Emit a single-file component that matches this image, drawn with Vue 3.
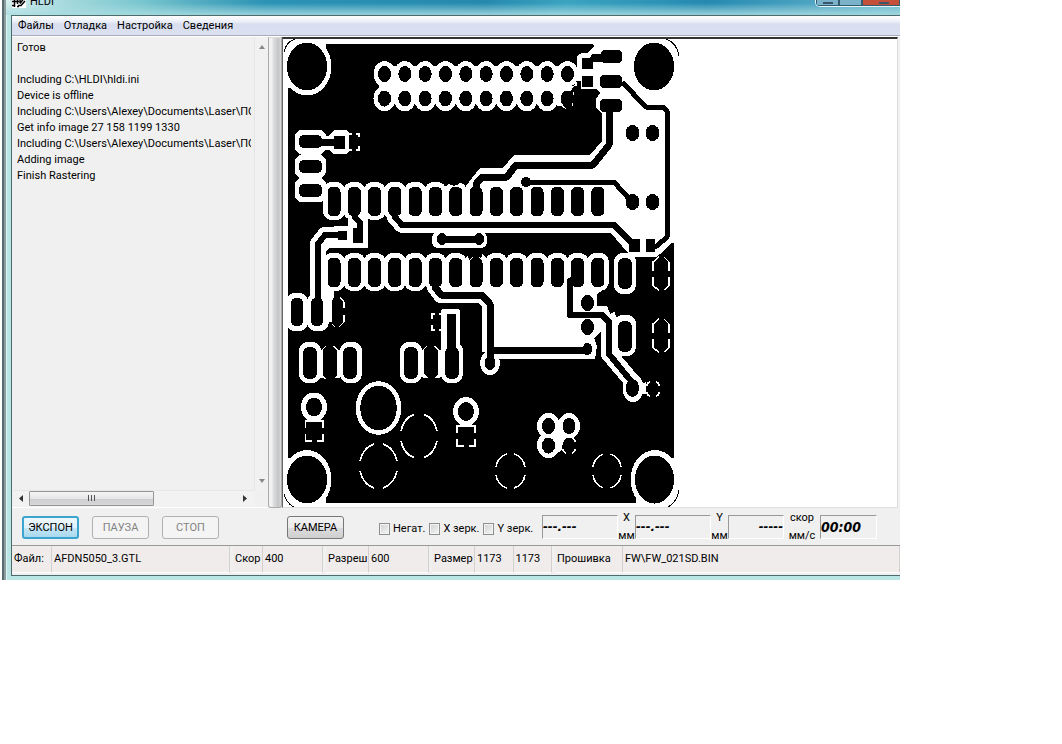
<script setup>
import { ref } from 'vue'

const menu = ['Файлы', 'Отладка', 'Настройка', 'Сведения']

const log = [
  'Готов',
  '',
  'Including C:\\HLDI\\hldi.ini',
  'Device is offline',
  'Including C:\\Users\\Alexey\\Documents\\Laser\\ПО\\',
  'Get info image 27 158 1199 1330',
  'Including C:\\Users\\Alexey\\Documents\\Laser\\ПО\\',
  'Adding image',
  'Finish Rastering',
].join('\n')

const negative = ref(false)
const mirrorX = ref(false)
const mirrorY = ref(false)

const range = (n, start, step) => Array.from({ length: n }, (_, i) => start + i * step)
const headerX = range(10, 384.5, 20.33)
const slotX = range(14, 334, 20.3)
</script>

<template>
  <div class="window">
    <header class="titlebar">
      <svg class="app-icon" width="14" height="14" viewBox="0 0 14 14" aria-hidden="true">
        <rect width="14" height="14" fill="#fff" />
        <path d="M0 7.500h7M0 11.500h3M2.500 4v9M5.500 3v7M5 12.500h2M13 3L8 9.500M13 7L9 11.500H6M8 6v3" fill="none" stroke="#000" stroke-width="1.500" />
      </svg>
      <span class="title">HLDI</span>
      <div class="caption">
        <button type="button" class="cap" aria-label="Minimize"><i></i></button>
        <button type="button" class="cap" aria-label="Maximize"></button>
        <button type="button" class="cap close" aria-label="Close"><i></i></button>
      </div>
    </header>

    <div class="client">
      <nav class="menu">
        <button v-for="m in menu" :key="m" type="button">{{ m }}</button>
      </nav>

      <main class="work">
        <section class="log">
          <textarea :value="log" readonly wrap="off" aria-label="Log"></textarea>
          <div class="vbar">
            <svg width="6" height="4" viewBox="0 0 6 4"><path d="M3 0L6 4H0z" fill="#888" /></svg>
            <svg width="6" height="4" viewBox="0 0 6 4"><path d="M3 4L6 0H0z" fill="#888" /></svg>
          </div>
          <div class="hbar">
            <svg width="4" height="7" viewBox="0 0 4 7"><path d="M4 0v7L0 3.500z" fill="#333" /></svg>
            <div class="thumb"><i></i><i></i><i></i></div>
            <svg class="right" width="4" height="7" viewBox="0 0 4 7"><path d="M0 0v7L4 3.500z" fill="#333" /></svg>
          </div>
        </section>
        <div class="splitter"></div>
        <section class="canvas">
          <svg class="board" width="398" height="468" viewBox="283 39 398 468" shape-rendering="crispEdges" role="img" aria-label="PCB">
            <rect x="288" y="44" width="386" height="459" />
            <!-- copper-free areas -->
            <g fill="#fff">
              <path d="M593 43H682V243H671L660 254L656 257H635L627 252L611 233H400L392 222V205H466L463 190L472 178L480 168H503L514 155H590L602 141V114L596 108V99L600 93L596 89H581V81H577V56L582 53H587L594 46z" />
              <path d="M440 272H608L607 287L597 294V306H607L612 318L602 330L594 338L597 346L595 359H486V302L478 290H440z" />
              <path d="M288 44H326V66H288zM288 66H300V88H288zM288 458H300V503H288zM307 480H326V503H307zM636 480H674V503H636zM655 458H674V480H655z" />
              <ellipse cx="307" cy="66.500" rx="24.500" ry="29" />
              <ellipse cx="307" cy="479.500" rx="24.500" ry="29.500" />
              <ellipse cx="655" cy="479.500" rx="24.500" ry="29.500" />
            </g>
            <rect x="674" y="39" width="8" height="468" fill="#fff" />
            <g>
              <ellipse cx="307" cy="66.500" rx="20" ry="24" />
              <ellipse cx="654" cy="66.500" rx="20" ry="24" />
              <ellipse cx="307" cy="479.500" rx="20" ry="24" />
              <ellipse cx="654.500" cy="479.500" rx="19.500" ry="24" />
            </g>
            <path d="M284 52Q286 42 295 39M666 39Q677 43 679 56M284 494Q287 504 294 507M679 490Q677 502 668 507" fill="none" stroke="#000" />

            <!-- header connector -->
            <g fill="#fff">
              <ellipse v-for="x in headerX" :key="x" :cx="x" cy="74" rx="11" ry="12.800" />
              <ellipse v-for="x in headerX.slice(0, 9)" :key="x" :cx="x" cy="98.500" rx="11" ry="12.800" />
              <rect x="379" y="80" width="186" height="14" />
              <path d="M375 66H572V80H375zM375 92H556V104H375z" />
              <path d="M555 86H577V81L571 91L563 94L561 102L566 109L561 106L557 106z" />
            </g>
            <ellipse v-for="x in headerX" :key="x" :cx="x" cy="74" rx="6.500" ry="8" />
            <ellipse v-for="x in headerX" :key="x" :cx="x" cy="98.500" rx="6.500" ry="8" />
            <path d="M573 95V92M572 106L573 103" stroke="#fff" />

            <!-- clearances -->
            <g fill="#fff">
              <rect x="295" y="130" width="31" height="24" rx="7" />
              <rect x="295" y="155" width="31" height="23" rx="7" />
              <rect x="295" y="178" width="31" height="24" rx="7" />
              <rect x="301" y="140" width="20" height="52" />
              <path d="M318 132L324 136H329L334 130H346L349 133V151L346 154H334L329 150H320z" />
              <rect v-for="x in slotX" :key="x" :x="x - 11" y="182" width="22" height="38" rx="9" />
              <rect v-for="x in slotX" :key="x" :x="x - 11" y="253" width="22" height="38" rx="9" />
              <path d="M323 190H600V212H323zM323 262H600V282H323z" />
              <rect x="432" y="232" width="55" height="16" rx="6" />
              <rect x="614" y="253" width="22" height="41" rx="9" />
              <rect x="614" y="315" width="22" height="41" rx="9" />
              <rect x="286" y="293" width="22" height="38" rx="9" />
              <rect x="307" y="293" width="22" height="38" rx="9" />
              <path d="M300 302H332V322H300zM322 280H334V322H322z" />
              <path d="M348 215H368V248H330L325 252V262H322V235L335 226H348z" />
              <rect x="299" y="342" width="22" height="41" rx="9" />
              <rect x="340" y="342" width="22" height="41" rx="9" />
              <rect x="400" y="342" width="22" height="41" rx="9" />
              <rect x="441" y="342" width="22" height="41" rx="9" />
              <path d="M317 350H323V376L326 379L317 377zM337 350H344V377L335 378L337 375zM418 350H424V374L428 378L418 377zM438 350H445V377L434 378L438 374z" />
              <rect x="441" y="309" width="19" height="45" rx="3" />
            </g>
            <g fill="none" stroke="#fff" stroke-width="16" stroke-linejoin="round">
              <path d="M395 214V217L402 225H420" />
              <path d="M318 310V244L325 235H344V236" />
              <path d="M435 282V287L441 295H482L490 304V352" />
              <path d="M607 315L609 320V354L631 380" />
            </g>
            <ellipse cx="490" cy="363" rx="10" ry="12" fill="#fff" />
            <ellipse cx="633" cy="388" rx="10.500" ry="14" fill="#fff" />
            <path d="M640 384L646 382V394L640 393z" fill="#fff" />

            <!-- black gaps around the open pads -->
            <path d="M447 178H462L459 184L454 186L449 184zM467 254L483 252L480 262H470z" />
            <path d="M448 190L446 186M449 190L452 187M458 186L463 191M469 261L473 258M479 258L483 262" stroke="#fff" stroke-width="1.500" fill="none" />

            <!-- slots -->
            <g>
              <rect v-for="x in slotX" :key="x" :x="x - 6.500" y="187" width="13" height="29" rx="5" />
              <rect v-for="x in slotX" :key="x" :x="x - 6.500" y="258" width="13" height="29" rx="5" />
              <rect x="618" y="258" width="14" height="31" rx="6" />
              <rect x="618" y="321" width="14" height="31" rx="6" />
              <rect x="653" y="258" width="15" height="32" rx="6" />
              <rect x="291" y="298" width="12" height="28" rx="5" />
              <rect x="311" y="298" width="12" height="28" rx="5" />
              <rect x="332" y="297" width="12" height="30" rx="5" />
              <rect x="303" y="347" width="14" height="32" rx="6" />
              <rect x="343" y="347" width="14" height="32" rx="6" />
              <rect x="404" y="347" width="14" height="32" rx="6" />
              <rect x="445" y="347" width="14" height="32" rx="6" />
              <rect x="447" y="314" width="9" height="40" />
              <rect x="299" y="135" width="23" height="13" rx="5" />
              <rect x="299" y="160" width="23" height="13" rx="5" />
              <rect x="299" y="184" width="23" height="13" rx="5" />
              <path d="M318 139H334V136H345V149H334V146H318z" />
              <path d="M582 58H590L592 54H602V62H593V69H582zM582 76H593V87H582z" />
              <rect x="601" y="50" width="21" height="13" rx="4" />
              <rect x="600" y="75" width="22" height="13" rx="4" />
              <rect x="600" y="99" width="22" height="13" rx="4" />
              <path d="M629 239H640V252H629zM646 239H655V252H646z" />
              <path d="M338 231H347V240H338zM353 228H363V243H353z" />
              <ellipse cx="442" cy="239" rx="5" ry="6" />
              <ellipse cx="479" cy="239" rx="5" ry="6" />
            </g>

            <!-- tracks -->
            <g fill="none" stroke="#000" stroke-linejoin="round">
              <path d="M476 192V184L482 177H507L516 165H593L609 145V106" stroke-width="7" />
              <path d="M526 182H614L632 202" stroke-width="5" />
              <path d="M622 82L646 107H663L667 111V237L657 246H650" stroke-width="5" />
              <path d="M395 210V217L402 225H614L634 245" stroke-width="6" />
              <path d="M355 212V217L360 223V235M318 310V244L325 235H344" stroke-width="6" />
              <path d="M442 239H479" stroke-width="7" />
              <path d="M435 280V287L441 295H482L490 304V365M490 350H588" stroke-width="7" />
              <path d="M577 276L570 281V315H602L609 322V354L631 381V388" stroke-width="6" />
            </g>
            <g>
              <circle cx="526" cy="182" r="5" />
              <ellipse cx="632.500" cy="133" rx="7" ry="8" />
              <ellipse cx="652.500" cy="133" rx="7" ry="8" />
              <ellipse cx="632.500" cy="202" rx="7" ry="8" />
              <ellipse cx="652.500" cy="202" rx="7" ry="8" />
              <ellipse cx="587.500" cy="303" rx="6.500" ry="8" />
              <ellipse cx="587.500" cy="327" rx="6.500" ry="8" />
              <ellipse cx="587.500" cy="349" rx="5" ry="6" />
              <ellipse cx="490" cy="363" rx="5.500" ry="7" />
              <ellipse cx="632.500" cy="388" rx="6.500" ry="9" />
            </g>

            <!-- rings -->
            <g fill="#000" stroke="#fff">
              <ellipse cx="378.500" cy="408" rx="20.500" ry="24.500" stroke-width="4.500" />
              <ellipse cx="314" cy="407" rx="10.500" ry="12" stroke-width="5" />
              <ellipse cx="466" cy="411.500" rx="10.500" ry="12" stroke-width="5" />
            </g>
            <g fill="#fff">
              <ellipse cx="548.500" cy="426" rx="11.500" ry="13" />
              <ellipse cx="569" cy="426" rx="11" ry="13" />
              <ellipse cx="548.500" cy="445" rx="11.500" ry="13" />
              <path d="M552 430H572V440L562 446V450L556 454z" />
            </g>
            <g>
              <ellipse cx="548.500" cy="426" rx="6.500" ry="8" />
              <ellipse cx="569" cy="426" rx="6.500" ry="8" />
              <ellipse cx="548.500" cy="445.500" rx="6.500" ry="8" />
              <ellipse cx="569" cy="445.500" rx="6.500" ry="8" />
            </g>

            <!-- broken outlines -->
            <g fill="none" stroke="#fff" stroke-width="1.600" stroke-dasharray=".7 .3" stroke-dashoffset="-.15">
              <ellipse cx="419" cy="436" rx="18.500" ry="22.500" pathLength="4" />
              <ellipse cx="378.500" cy="466" rx="19" ry="22.500" pathLength="4" />
              <ellipse cx="510.500" cy="471" rx="15" ry="17.500" pathLength="4" />
              <ellipse cx="607" cy="471" rx="14.500" ry="17.500" pathLength="4" />
              <ellipse cx="653" cy="389" rx="7" ry="8.500" pathLength="4" stroke-dasharray=".5 .5" stroke-dashoffset="-.25" />
              <ellipse cx="569" cy="445.500" rx="7" ry="9" pathLength="4" stroke-dasharray=".5 .5" stroke-dashoffset="-.25" />
            </g>
            <g fill="none" stroke="#fff" stroke-width="1.400">
              <path d="M305.500 428V421H323V428M305.500 434V441H312M317 441H323V434" />
              <path d="M457 433V426H475V433M457 439V446H464M469 446H475V439" />
              <path d="M659 257L653 262V271M664 257L669 262V271M653 277V286L659 290M669 277V286L664 290" />
              <path d="M659 319L653 324V333M664 319L669 324V333M653 339V348L659 352M669 339V348L664 352" />
              <path d="M340 297L344 302V308M344 315V322L339 327M332 324L335 327" />
              <path d="M349 134H352M356 134H359V137M349 150H352M356 150H359V146" />
              <path d="M432 319V314H435M439 314H442M432 325V330H435M439 330H442" />
              <path d="M322 350L326 346M333 346L338 350M423 350L427 346M434 346L439 350" />
            </g>
          </svg>
        </section>
      </main>

      <section class="toolbar">
        <div class="actions">
          <button type="button" class="btn primary">ЭКСПОН</button>
          <button type="button" class="btn" disabled>ПАУЗА</button>
          <button type="button" class="btn" disabled>СТОП</button>
        </div>
        <button type="button" class="btn">КАМЕРА</button>
        <div class="checks">
          <label><input v-model="negative" type="checkbox">Негат.</label>
          <label><input v-model="mirrorX" type="checkbox">X зерк.</label>
          <label><input v-model="mirrorY" type="checkbox">Y зерк.</label>
        </div>
        <div class="readouts">
          <output class="lcd wide">---.---</output>
          <div class="unit"><span>X</span><span>мм</span></div>
          <output class="lcd wide">---.---</output>
          <div class="unit"><span>Y</span><span>мм</span></div>
          <output class="lcd speed">-----</output>
          <div class="unit rate"><span>скор</span><span>мм/с</span></div>
          <output class="lcd clock">00:00</output>
        </div>
      </section>

      <footer class="status">
        <dl class="file"><dt>Файл:</dt><dd>AFDN5050_3.GTL</dd></dl>
        <dl class="speed-cell"><dt>Скор</dt><dd>400</dd></dl>
        <dl class="res"><dt>Разреш</dt><dd>600</dd></dl>
        <dl class="size"><dt>Размер</dt><dd>1173</dd><dd>1173</dd></dl>
        <dl class="firmware"><dt>Прошивка</dt><dd>FW\FW_021SD.BIN</dd></dl>
      </footer>
    </div>
  </div>
</template>

<style>
body {
  background: #fff;
}
</style>

<style scoped>
.window {
  box-sizing: border-box;
  margin-right: 162px;
  padding: 0 0 4px 11px;
  overflow: hidden;
  background: linear-gradient(90deg, #fff 0 2px, #596a70 2px 4px, #8c9da0 4px 6px, #e0f5f5 6px 7px, #b9e5e5 7px);
  color: #000;
  font: 11px/16px Roboto, sans-serif;
}
button, textarea {
  font: inherit;
  color: inherit;
}
button {
  margin: 0;
}
.titlebar {
  display: flex;
  align-items: flex-start;
  height: 15px;
  margin-left: -5px;
  padding-left: 6px;
  overflow: hidden;
  background: linear-gradient(180deg, transparent 3px, #a9dce0cc 14px), linear-gradient(90deg, #d7efef 0, #a5d9dd 60px, #7cc8d0 130px, #54adc1 190px, #2b93b5 260px, #2589ae 480px, #3ba4c1 560px, #2589b0 700px, #6db9d1 100%);
}
.app-icon {
  flex: none;
  margin-top: -6px;
}
.title {
  margin: -6px 0 0 4px;
}
.caption {
  display: flex;
  margin: -12px 0 0 auto;
  border: 1px solid #e4f5fa;
  border-right: 0;
  border-radius: 0 0 0 5px;
  overflow: hidden;
}
.cap {
  box-sizing: border-box;
  width: 23px;
  height: 17px;
  padding: 11px 0 0 6px;
  border: 1px solid #335b70;
  background: #79b2c9;
}
.cap i {
  display: block;
  width: 10px;
  height: 2px;
  background: #39566a;
}
.close {
  width: 38px;
  padding-left: 16px;
  background: #c4503c;
}
.client {
  border: 1px solid #4d6a6c;
  border-right: 0;
  background: #f0f0f0;
}
.menu {
  display: flex;
  gap: 10px;
  padding: 2px 6px 1px;
  border-bottom: 1px solid #a9adbb;
  background: linear-gradient(#fff 0, #e9edf6 6px, #d8deef 8px, #dce1f1);
}
.menu button {
  padding: 0;
  border: 0;
  background: none;
}
.work {
  display: flex;
  border-top: 1px solid #fff;
}
.log {
  display: grid;
  grid-template: 1fr 17px / 1fr 14px;
  width: 256px;
  box-sizing: border-box;
  border-bottom: 1px solid #fff;
}
textarea {
  width: auto;
  min-width: 0;
  margin: 0 3px 0 0;
  padding: 3px 0 0 5px;
  border: 0;
  outline: 0;
  resize: none;
  overflow: hidden;
  background: none;
}
.vbar {
  display: flex;
  flex-direction: column;
  justify-content: space-between;
  align-items: center;
  padding: 8px 0 7px;
  border-left: 1px solid #e6e6e6;
  background: #f1f1f1;
}
.hbar {
  display: flex;
  align-items: center;
  gap: 6px;
  margin-left: 2px;
  padding: 0 7px 2px 5px;
  border-top: 1px solid #e6e6e6;
  background: #f2f2f2;
}
.hbar .right {
  margin-left: auto;
}
.thumb {
  display: flex;
  justify-content: center;
  align-items: center;
  gap: 2px;
  box-sizing: border-box;
  width: 125px;
  height: 15px;
  border: 1px solid #969696;
  border-radius: 1px;
  background: linear-gradient(#f5f5f5, #e6e6e7 50%, #cdced0 55%, #d8d8da);
}
.thumb i {
  width: 1px;
  height: 6px;
  background: #555;
}
.splitter {
  box-sizing: border-box;
  width: 14px;
  border: 1px solid #aaa;
  border-top-color: #ddd;
  border-radius: 0 0 3px 3px;
  background: linear-gradient(90deg, #f2f2f2 20%, #d8d9da 45%, #c4c5c7 80%, #ddd);
}
.canvas {
  flex: 1;
  min-width: 0;
  margin-right: 2px;
  border: 1px solid #666;
  border-top: 2px solid #333;
  border-right-color: #ddd;
  border-bottom-color: #e0e0e0;
  background: #fff;
}
.board {
  display: block;
}
.toolbar {
  display: flex;
  align-items: center;
  height: 37px;
  padding-left: 10px;
  white-space: nowrap;
}
.actions {
  display: flex;
  gap: 13px;
  margin-right: 68px;
}
.btn {
  flex: none;
  box-sizing: border-box;
  width: 57px;
  height: 23px;
  margin-top: 2px;
  padding: 0;
  border: 1px solid #777;
  border-radius: 3px;
  background: linear-gradient(#f3f3f3, #ebebeb 50%, #dcdcdc 52%, #cfcfcf);
}
.btn.primary {
  border: 2px solid #3ba4cf;
  background: linear-gradient(#eef7fb, #dff1fa 50%, #c5e6f5 52%, #a9d9ee);
}
.btn:disabled {
  border-color: #adb2b5;
  background: #f4f4f4;
  color: #838383;
}
.checks {
  display: flex;
  flex: none;
  gap: 4px;
  width: 163px;
  margin: 5px 0 0 35px;
}
.checks label {
  display: flex;
  align-items: center;
  gap: 3px;
}
.checks input {
  appearance: none;
  box-sizing: border-box;
  width: 11px;
  height: 12px;
  margin: 0;
  border: 1px solid #8e8f8f;
  background: linear-gradient(135deg, #cdd0d3, #f6f6f6);
  box-shadow: inset 0 0 0 1px #f4f4f4;
}
.readouts {
  display: flex;
  flex: none;
  align-items: center;
}
.lcd {
  box-sizing: border-box;
  height: 24px;
  border: 1px solid #fff;
  border-top-color: #999;
  border-left-color: #999;
  font: italic bold 13px/22px "DejaVu Sans Condensed", sans-serif;
}
.wide {
  width: 76px;
}
.speed {
  width: 56px;
  text-align: right;
}
.clock {
  width: 57px;
  font-size: 14px;
}
.unit {
  display: flex;
  flex-direction: column;
  gap: 2px;
  width: 17px;
  text-align: center;
}
.rate {
  width: 36px;
}
.status {
  display: flex;
  gap: 3px;
  padding-bottom: 2px;
  border-top: 1px solid #999;
}
.status dl {
  display: flex;
  box-sizing: border-box;
  margin: 0;
  background: #f0ecec;
}
.status dt, .status dd {
  box-sizing: border-box;
  margin: 0;
  padding: 5px 0 5px 2px;
  border-right: 1px solid #d4d0d0;
  border-bottom: 1px solid #fff;
}
.status dd {
  flex: 1;
}
.file {
  width: 218px;
}
.file dt {
  width: 40px;
}
.speed-cell {
  width: 90px;
}
.speed-cell dt {
  width: 30px;
}
.res {
  width: 103px;
}
.res dt {
  width: 43px;
}
.size {
  width: 120px;
}
.size dt {
  width: 43px;
}
.firmware {
  flex: 1;
}
.firmware dt {
  width: 68px;
}
</style>
